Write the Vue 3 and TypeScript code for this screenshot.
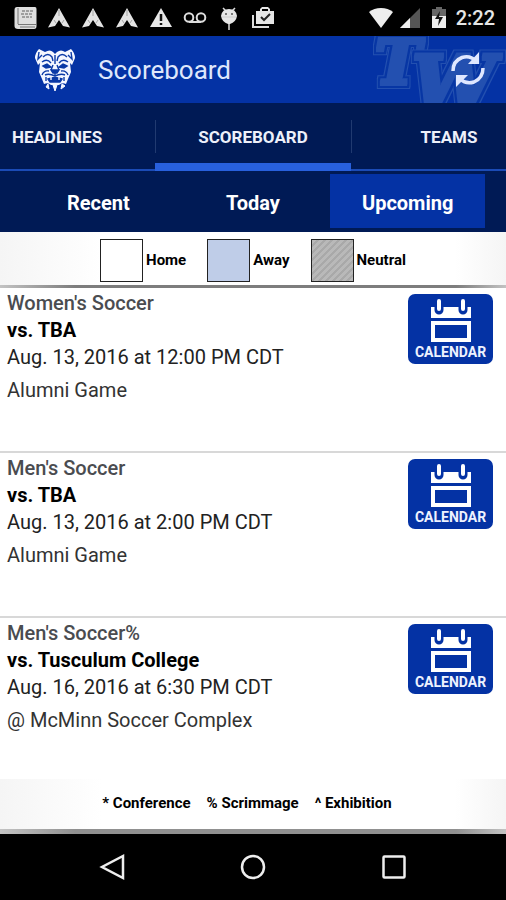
<script setup lang="ts">
import { ref } from 'vue'

interface Game {
  id: number
  sport: string
  opponent: string
  date: string
  note: string
}

const tabs: string[] = ['HEADLINES', 'SCOREBOARD', 'TEAMS']
const periods: string[] = ['Recent', 'Today', 'Upcoming']
const activeTab = ref('SCOREBOARD')
const activePeriod = ref('Upcoming')

const venues = [
  { label: 'Home', kind: 'home' },
  { label: 'Away', kind: 'away' },
  { label: 'Neutral', kind: 'neutral' },
]

const games: Game[] = [
  { id: 1, sport: "Women's Soccer", opponent: 'vs. TBA', date: 'Aug. 13, 2016 at 12:00 PM CDT', note: 'Alumni Game' },
  { id: 2, sport: "Men's Soccer", opponent: 'vs. TBA', date: 'Aug. 13, 2016 at 2:00 PM CDT', note: 'Alumni Game' },
  { id: 3, sport: "Men's Soccer%", opponent: 'vs. Tusculum College', date: 'Aug. 16, 2016 at 6:30 PM CDT', note: '@ McMinn Soccer Complex' },
]

const footnotes: string[] = ['* Conference', '% Scrimmage', '^ Exhibition']
</script>

<template>
  <div class="screen">
    <div class="status">
      <div class="notices">
        <svg viewBox="0 0 24 24" aria-hidden="true">
          <path d="M4 1H22Q23.500 1 23.500 3V20Q23.500 23 21 23H5Q1.500 23 1.500 20V4Q1.500 1 4 1Z" fill="#dedede" />
          <path d="M5 2V18M5 18.500H23M7 21H22" stroke="#777" fill="none" />
          <path d="M9 5H20M8 8H19M9 11H19" stroke="#8a8a8a" stroke-width="1.500" stroke-dasharray="3 1" />
        </svg>
        <svg v-for="n in 3" :key="n" viewBox="0 0 24 24" aria-hidden="true">
          <path d="M12 2L23 21.500L16 20L12 14L8 20L1 21.500Z" fill="#e4e4e4" />
          <path d="M12 4V10M7 14L9 17M17 14L15 17" stroke="#a5a5a5" fill="none" />
        </svg>
        <svg viewBox="0 0 24 24" aria-hidden="true">
          <path d="M12 2L23 21H1Z" fill="#e8e8e8" />
          <path d="M12 8V15M12 17V19" stroke="#111" stroke-width="2.500" />
        </svg>
        <svg viewBox="0 0 24 24" aria-hidden="true">
          <g fill="none" stroke="#ddd" stroke-width="2">
            <circle cx="6" cy="11.500" r="4.300" /><circle cx="18" cy="11.500" r="4.300" /><path d="M6 16H18" />
          </g>
        </svg>
        <svg viewBox="0 0 24 24" aria-hidden="true">
          <path d="M6 2L9 5M18 2L15 5M12 17V24" stroke="#ddd" stroke-width="1.500" />
          <path d="M4 10Q5 3 12 3T20 10Q19 16 13 18H11Q5 16 4 10Z" fill="#e6e6e6" />
          <circle cx="9" cy="8" r="1" fill="#555" /><circle cx="15" cy="8" r="1" fill="#555" />
          <path d="M5 11H19" stroke="#ccc" />
        </svg>
        <svg viewBox="0 0 24 24" aria-hidden="true">
          <path d="M2 9V21H18" fill="none" stroke="#ddd" stroke-width="2" />
          <path d="M5 5H9V3L11 1H17L19 3V5H23V18H5ZM11 5H17V3H11Z" fill="#e6e6e6" fill-rule="evenodd" />
          <path d="M10 11L13 14L19 8" fill="none" stroke="#222" stroke-width="2" />
        </svg>
      </div>
      <div class="system">
        <svg class="wifi" viewBox="0 0 26 24" aria-hidden="true"><path d="M13 22L1 6Q6 2 13 2T25 6Z" fill="#eee" /></svg>
        <svg class="signal" viewBox="0 0 24 24" aria-hidden="true">
          <path d="M22 2V22H2Z" fill="#555" /><path d="M12 12V22H2Z" fill="#eee" />
        </svg>
        <svg class="battery" viewBox="0 0 16 24" aria-hidden="true">
          <path d="M5 1H11V3H15V22H1V3H5Z" fill="#666" /><path d="M1 10H15V22H1Z" fill="#eee" />
          <path d="M9 5L4 13H8L7 20L12 11H8Z" fill="#111" />
        </svg>
        <span class="clock">2:22</span>
      </div>
    </div>

    <header class="bar">
      <svg class="watermark" viewBox="0 0 146 67" aria-hidden="true">
        <defs>
          <filter id="block-letter" x="-20%" y="-20%" width="140%" height="140%" color-interpolation-filters="sRGB">
            <feMorphology in="SourceAlpha" operator="dilate" radius="5" result="outer" />
            <feMorphology in="SourceAlpha" operator="dilate" radius="4" result="gap" />
            <feMorphology in="SourceAlpha" operator="dilate" radius="2" result="body" />
            <feFlood flood-color="#2350b0" result="light" />
            <feFlood flood-color="#0736a4" result="deep" />
            <feComposite in="light" in2="outer" operator="in" result="ring" />
            <feComposite in="deep" in2="gap" operator="in" result="inset" />
            <feComposite in="light" in2="body" operator="in" result="face" />
            <feMerge><feMergeNode in="ring" /><feMergeNode in="inset" /><feMergeNode in="face" /></feMerge>
          </filter>
        </defs>
        <text x="15" y="48" font-size="61" filter="url(#block-letter)">T</text>
        <text x="52" y="73" font-size="74" filter="url(#block-letter)">W</text>
      </svg>
      <svg class="mascot" viewBox="0 0 42 44" aria-hidden="true">
        <path d="M5 1L11 4Q16 1 19 4L21 6L23 4Q27 1 31 4L37 1Q41 5 41 10L38 17L36 15L37 24L34 31L32 36Q28 34 25 37H17Q14 34 10 36L8 31L5 24L6 15L4 17L1 10Q1 5 5 1Z" fill="#f4f6ff" />
        <path d="M14 36L15 41L12 39ZM19 37L21 43L23 37ZM28 36L27 41L31 38Z" fill="#f4f6ff" stroke="#f4f6ff" />
        <g fill="none" stroke="#0b39a6" stroke-width="1.400">
          <path d="M5 4L4 11L8 7M37 4L38 11L34 7" />
          <path d="M9 9Q14 4 18 9L19 13M33 9Q28 4 24 9L23 13" />
          <path d="M8 14Q13 10 17 15M34 14Q29 10 25 15" />
          <path d="M9 18L13 16L17 19L12 20ZM33 18L29 16L25 19L30 20Z" fill="#0b39a6" />
          <path d="M21 7V16M19 17L17 22M23 17L25 22" />
          <path d="M17 22H25L23 25H19Z" fill="#0b39a6" />
          <path d="M15 23Q10 22 8 27M27 23Q32 22 34 27M21 25V28" />
          <path d="M11 27Q15 25 21 28Q27 25 31 27M12 29V33M30 29V33" />
          <path d="M14 31Q21 28 28 31L26 34H16Z" fill="#0b39a6" />
          <path d="M17 29V32M25 29V32" stroke="#f4f6ff" />
        </g>
      </svg>
      <h1>Scoreboard</h1>
      <button class="refresh" type="button" aria-label="Refresh">
        <svg viewBox="0 0 40 38" aria-hidden="true">
          <path d="M5 20Q5 10 14 6.500Q22 4 28 10M35 17Q35 27 26 31Q18 33.500 12 28" fill="none" stroke="#dfe7ff" stroke-width="3.500" />
          <path d="M31 1V13H20ZM8 36V24H20Z" fill="#dfe7ff" />
        </svg>
      </button>
    </header>

    <nav class="tabs" aria-label="Sections">
      <button v-for="t in tabs" :key="t" type="button" class="tab" :class="{ active: activeTab === t }" @click="activeTab = t">
        {{ t }}
      </button>
    </nav>

    <nav class="periods" aria-label="Period">
      <button v-for="p in periods" :key="p" type="button" class="period" :class="{ active: activePeriod === p }" @click="activePeriod = p">
        {{ p }}
      </button>
    </nav>

    <div class="legend">
      <div v-for="v in venues" :key="v.kind" class="venue"><span class="swatch" :class="v.kind"></span>{{ v.label }}</div>
    </div>

    <main class="games">
      <article v-for="g in games" :key="g.id" class="game">
        <div class="info">
          <h2>{{ g.sport }}</h2>
          <p class="opponent">{{ g.opponent }}</p>
          <p class="date">{{ g.date }}</p>
          <p class="note">{{ g.note }}</p>
        </div>
        <button type="button" class="calendar">
          <svg viewBox="0 0 42 44" aria-hidden="true">
            <path d="M1 9H41V20H1ZM1 23H41V44H1ZM5 27V40H37V27Z" fill="#fff" fill-rule="evenodd" />
            <path d="M9 5V12M33 5V12" stroke="#0432a4" stroke-width="9" stroke-linecap="round" />
            <path d="M9 3V11M33 3V11" stroke="#fff" stroke-width="4" stroke-linecap="round" />
          </svg>
          <span>CALENDAR</span>
        </button>
      </article>
    </main>

    <footer class="footnotes"><span v-for="f in footnotes" :key="f">{{ f }}</span></footer>

    <div class="system-nav">
      <button type="button" aria-label="Back">
        <svg viewBox="0 0 28 28"><path d="M25 3V25L4 14Z" /></svg>
      </button>
      <button type="button" aria-label="Home screen">
        <svg viewBox="0 0 28 28"><circle cx="14" cy="14" r="11" /></svg>
      </button>
      <button type="button" aria-label="Recent apps">
        <svg viewBox="0 0 28 28"><rect x="3.500" y="3.500" width="21" height="21" rx="1" /></svg>
      </button>
    </div>
  </div>
</template>

<style>
body {
  margin: 0;
}
</style>

<style scoped>
.screen {
  display: flex;
  flex-direction: column;
  min-height: 100vh;
  overflow: hidden;
  background: #fff;
  color: #000;
  font-family: Roboto, "Liberation Sans", sans-serif;
}
button {
  margin: 0;
  padding: 0;
  border: 0;
  background: none;
  color: inherit;
  font: inherit;
}
h1, h2, p {
  margin: 0;
}
.status {
  display: flex;
  justify-content: space-between;
  align-items: center;
  height: 36px;
  padding: 0 11px 0 13px;
  background: #000;
}
.notices {
  display: flex;
  gap: 10px;
}
.notices svg {
  width: 24px;
  height: 24px;
}
.system {
  display: flex;
  align-items: center;
}
.system svg {
  height: 24px;
}
.wifi {
  width: 26px;
}
.signal {
  width: 24px;
  margin-left: 4px;
}
.battery {
  width: 16px;
  margin: 0 9px;
}
.clock {
  color: #e6e6e6;
  font-size: 20px;
  font-weight: 500;
}
.bar {
  position: relative;
  display: flex;
  align-items: center;
  height: 67px;
  padding: 0 18px 0 34px;
  background: #0432a4;
  overflow: hidden;
}
.watermark {
  position: absolute;
  top: 0;
  right: 0;
  width: 146px;
  height: 67px;
  font-family: "DejaVu Serif", serif;
  font-weight: 700;
  font-style: italic;
}
.mascot {
  width: 42px;
  height: 44px;
}
h1 {
  position: relative;
  flex: 1;
  margin-left: 22px;
  padding-top: 1px;
  color: #dfe7fb;
  font-size: 26px;
  font-weight: 400;
}
.refresh {
  position: relative;
}
.refresh svg {
  display: block;
  width: 40px;
  height: 38px;
}
.tabs {
  display: flex;
  justify-content: center;
  height: 68px;
  box-sizing: border-box;
  border-bottom: 2px solid #1b4bb5;
  background: #001a55;
}
.tab {
  position: relative;
  flex: 0 0 196px;
  height: 68px;
  color: #edf0fa;
  font-size: 17px;
  font-weight: 700;
}
.tab + .tab::before {
  content: "";
  position: absolute;
  top: 17px;
  left: 0;
  width: 1px;
  height: 33px;
  background: #213a70;
}
.tab.active::after {
  content: "";
  position: absolute;
  right: 0;
  bottom: 0;
  left: 0;
  height: 8px;
  background: #2860dc;
}
.periods {
  display: grid;
  grid-template-columns: repeat(3, 1fr);
  height: 61px;
  box-sizing: border-box;
  padding: 3px 21px 4px;
  background: #001a55;
}
.period {
  padding-top: 4px;
  color: #fff;
  font-size: 20px;
  font-weight: 700;
}
.period.active {
  background: #0432a4;
}
.legend, .footnotes {
  display: flex;
  justify-content: center;
  align-items: center;
  background: linear-gradient(90deg, #f5f5f5, #fff 20%, #fff 90%, #f5f5f5);
  font-size: 15px;
  font-weight: 700;
}
.legend {
  gap: 21px;
  height: 50px;
  padding-top: 3px;
  border-bottom: 3px solid;
  border-image: linear-gradient(90deg, #c4c4c4, #7d7d7d 15%, #7d7d7d 90%, #c4c4c4) 1;
}
.venue {
  display: flex;
  align-items: center;
  gap: 3px;
}
.swatch {
  width: 41px;
  height: 41px;
  border: 1px solid #222;
}
.home {
  background: #fff;
}
.away {
  background: #bfcde8;
}
.neutral {
  background: repeating-linear-gradient(135deg, #b9b9b9 0 3px, #a9a9a9 3px 5px);
}
.game {
  display: flex;
  justify-content: space-between;
  align-items: flex-start;
  padding: 2px 13px 44px 7px;
  border-bottom: 2px solid #d8d8d8;
}
.game:last-child {
  padding-bottom: 42px;
  border-bottom: 0;
}
.info {
  flex: 1;
  font-size: 20px;
  line-height: 27px;
}
h2 {
  color: #4a4c50;
  font-size: 20px;
  font-weight: 500;
}
.opponent {
  font-weight: 700;
}
.date {
  color: #222;
}
.note {
  margin-top: 2px;
  color: #333;
  font-size: 20px;
  line-height: 34px;
}
.calendar {
  display: flex;
  flex-direction: column;
  align-items: center;
  width: 85px;
  height: 70px;
  margin-top: 4px;
  border-radius: 7px;
  background: #0432a4;
  color: #eef2ff;
  font-size: 14px;
  font-weight: 700;
  line-height: 20px;
}
.calendar svg {
  width: 42px;
  height: 44px;
  margin-top: 4px;
}
.footnotes {
  flex: 1;
  gap: 16px;
  min-height: 42px;
  padding: 0 12px 2px 0;
  border-bottom: 5px solid;
  border-image: linear-gradient(90deg, #c4c4c4, #909090 15%, #909090 90%, #c4c4c4) 1;
}
.system-nav {
  display: flex;
  justify-content: center;
  align-items: center;
  gap: 113px;
  height: 66px;
  background: #000;
}
.system-nav svg {
  display: block;
  width: 28px;
  height: 28px;
  fill: none;
  stroke: #eee;
  stroke-width: 2.500;
}
</style>
